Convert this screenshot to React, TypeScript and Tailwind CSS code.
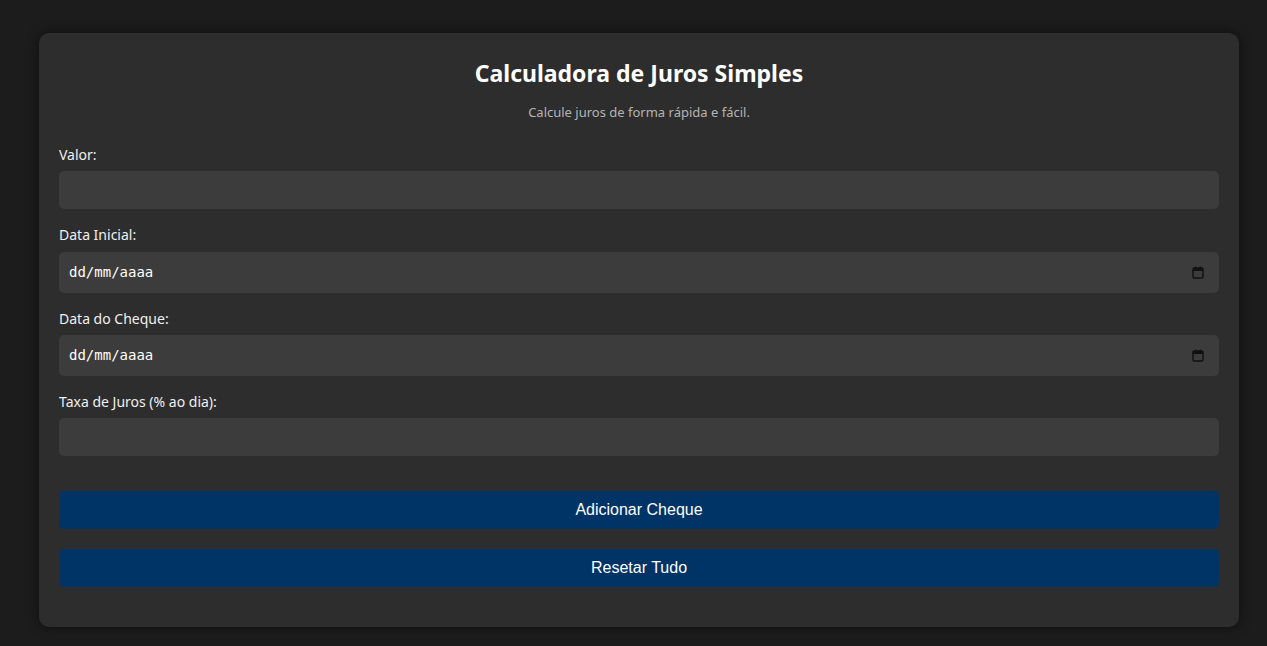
import React from "react";

function CalendarIcon() {
  return (
    <svg width="12" height="13" viewBox="0 0 12 13" className="shrink-0">
      <rect x="1" y="2" width="10" height="10" rx="1" fill="none" stroke="#111" strokeWidth="1.4" />
      <rect x="1" y="2" width="10" height="3" fill="#111" />
      <rect x="3" y="0.5" width="1.4" height="2.5" fill="#111" />
      <rect x="7.6" y="0.5" width="1.4" height="2.5" fill="#111" />
    </svg>
  );
}

function Label({ children, extra }: { children: React.ReactNode; extra?: boolean }) {
  return (
    <div className={extra ? "text-[14px] leading-[20px] text-[#f0f0f0] mb-[7px]" : "text-[14px] leading-[20px] text-[#f0f0f0] mb-[6px]"}>
      {children}
    </div>
  );
}

function TextBox() {
  return <input type="text" className="block w-full h-[38px] rounded-[5px] bg-[#3c3c3c] outline-none border-0 px-[10px] text-white mb-[16px]" />;
}

function DateBox() {
  return (
    <div className="flex items-center justify-between w-full h-[41px] rounded-[5px] bg-[#3c3c3c] pl-[10px] pr-[15px] mb-[16px]">
      <span className="text-[14px] text-white" style={{ fontFamily: '"DejaVu Sans Mono", "Liberation Mono", monospace' }}>
        dd/mm/aaaa
      </span>
      <CalendarIcon />
    </div>
  );
}

export default function App() {
  return (
    <div className="min-h-[646px] bg-[#1c1c1c] pt-[33px]" style={{ fontFamily: '"Segoe UI", "Noto Sans", sans-serif' }}>
      <div className="ml-[39px] w-[1200px] bg-[#2d2d2d] rounded-[10px] px-[20px] pt-[20px] pb-[40px] shadow-[0_0_12px_rgba(0,0,0,0.5)]">
        <h1 className="text-center text-white font-bold text-[23px] leading-[28px] mt-[6px]">Calculadora de Juros Simples</h1>
        <p className="text-center text-[#b4b4b4] text-[13px] leading-[20px] mt-[15px] mb-[23px]">Calcule juros de forma rápida e fácil.</p>
        <Label>Valor:</Label>
        <TextBox />
        <Label extra>Data Inicial:</Label>
        <DateBox />
        <Label>Data do Cheque:</Label>
        <DateBox />
        <Label>Taxa de Juros (% ao dia):</Label>
        <TextBox />
        <div className="pt-[19px] flex flex-col gap-[20px]" style={{ fontFamily: '"Liberation Sans", Arial, sans-serif' }}>
          <button className="h-[38px] w-full rounded-[5px] bg-[#003366] text-white text-[16px]">Adicionar Cheque</button>
          <button className="h-[38px] w-full rounded-[5px] bg-[#003366] text-white text-[16px]">Resetar Tudo</button>
        </div>
      </div>
    </div>
  );
}
